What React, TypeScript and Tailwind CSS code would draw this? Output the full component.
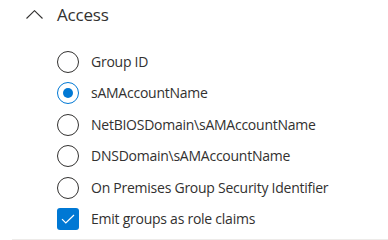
import { useState } from "react";

const options = [
    "Group ID",
    "sAMAccountName",
    "NetBIOSDomain\\sAMAccountName",
    "DNSDomain\\sAMAccountName",
    "On Premises Group Security Identifier",
];

export default function App() {
    const [selected, setSelected] = useState(1);
    const [emit, setEmit] = useState(true);

    return (
        <div className="w-[388px] h-[240px] bg-white overflow-hidden text-[#323130]" style={{ fontFamily: '"Open Sans", "Noto Sans", sans-serif' }}>
            <div className="ml-[12px] h-[240px] border-b border-[#edebe9] flex flex-col">
                {/* section header */}
                <div className="flex items-center h-[29px] pl-[14px]">
                    <svg width="17" height="9" viewBox="0 0 17 9" fill="none">
                        <path d="M0.5 8.5 L8.5 0.7 L16.5 8.5" stroke="#323130" strokeWidth="1.1" />
                    </svg>
                    <span className="ml-[14px] text-[17px] leading-none tracking-[-0.2px]">Access</span>
                </div>

                <div className="mt-[17px] pl-[45px] flex flex-col">
                    {options.map((label, i) => (
                        <button
                            key={label}
                            onClick={() => setSelected(i)}
                            className="h-[31.5px] flex items-center gap-[12px] text-left"
                        >
                            <span
                                className={
                                    "w-[22px] h-[22px] rounded-full border flex items-center justify-center shrink-0 " +
                                    (selected === i ? "border-[#0078d4]" : "border-[#323130]")
                                }
                            >
                                {selected === i && <span className="w-[10px] h-[10px] rounded-full bg-[#0078d4]" />}
                            </span>
                            <span className="text-[14px] leading-none tracking-[-0.25px]">{label}</span>
                        </button>
                    ))}
                    <button onClick={() => setEmit(!emit)} className="h-[31.5px] flex items-center gap-[12px] text-left">
                        <span
                            className={
                                "w-[22px] h-[22px] rounded-[3px] flex items-center justify-center shrink-0 " +
                                (emit ? "bg-[#0078d4]" : "border border-[#323130]")
                            }
                        >
                            {emit && (
                                <svg width="14" height="10" viewBox="0 0 14 10" fill="none">
                                    <path d="M1 5.2 L4.8 9 L13 1" stroke="white" strokeWidth="1.2" />
                                </svg>
                            )}
                        </span>
                        <span className="text-[14px] leading-none tracking-[-0.25px]">Emit groups as role claims</span>
                    </button>
                </div>
            </div>
        </div>
    );
}
